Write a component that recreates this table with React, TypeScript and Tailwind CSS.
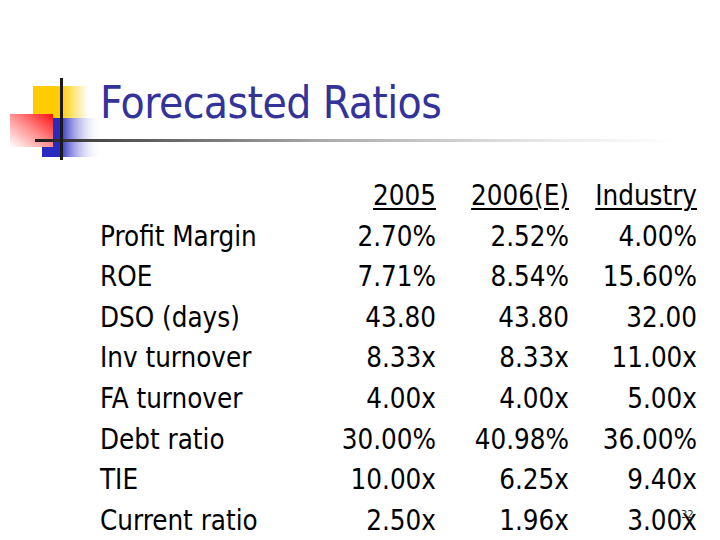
const rows: [string, string, string, string][] = [
  ["Profit Margin", "2.70%", "2.52%", "4.00%"],
  ["ROE", "7.71%", "8.54%", "15.60%"],
  ["DSO (days)", "43.80", "43.80", "32.00"],
  ["Inv turnover", "8.33x", "8.33x", "11.00x"],
  ["FA turnover", "4.00x", "4.00x", "5.00x"],
  ["Debt ratio", "30.00%", "40.98%", "36.00%"],
  ["TIE", "10.00x", "6.25x", "9.40x"],
  ["Current ratio", "2.50x", "1.96x", "3.00x"],
];

// slide template decoration: overlapping colour squares and crossed rules
function Logo() {
  return (
    <svg className="absolute left-0 top-0" width="720" height="170" viewBox="0 0 720 170">
      <defs>
        <linearGradient id="yel" x1="0" y1="0" x2="1" y2="0">
          <stop offset="0" stopColor="#ffcc00" />
          <stop offset="0.5" stopColor="#ffcc00" />
          <stop offset="1" stopColor="#ffffff" />
        </linearGradient>
        <linearGradient id="blu" x1="0" y1="0" x2="1" y2="0">
          <stop offset="0" stopColor="#2a2ac0" />
          <stop offset="0.3" stopColor="#2a2ac0" />
          <stop offset="1" stopColor="#ffffff" stopOpacity="0" />
        </linearGradient>
        <linearGradient id="red" x1="1" y1="0" x2="0" y2="1">
          <stop offset="0" stopColor="#ff1010" />
          <stop offset="0.5" stopColor="#ff9090" />
          <stop offset="1" stopColor="#ffffff" />
        </linearGradient>
        <linearGradient id="rule" x1="0" y1="0" x2="1" y2="0">
          <stop offset="0" stopColor="#1a1a1a" />
          <stop offset="0.08" stopColor="#444444" />
          <stop offset="0.45" stopColor="#aaaaaa" />
          <stop offset="0.8" stopColor="#e8e8e8" />
          <stop offset="1" stopColor="#ffffff" />
        </linearGradient>
      </defs>
      <rect x="33" y="86" width="55" height="32" fill="url(#yel)" />
      <rect x="42" y="118" width="60" height="39" fill="url(#blu)" />
      <rect x="10" y="114" width="43" height="33" fill="url(#red)" />
      <rect x="35" y="139" width="640" height="3" fill="url(#rule)" />
      <rect x="60" y="78" width="3" height="82" fill="#1a1a1a" />
    </svg>
  );
}

export default function App() {
  return (
    <div
      className="relative w-[720px] h-[540px] bg-white overflow-hidden text-black"
      style={{ fontFamily: '"DejaVu Sans Condensed", "DejaVu Sans", sans-serif' }}
    >
      <Logo />

      <div className="relative flex flex-col pl-[100px]">
        <h1 className="h-[176px] pt-[81px] text-[44px] leading-[44px] text-[#333399] tracking-[-0.6px]">
          Forecasted Ratios
        </h1>

        <div className="grid grid-cols-[236px_100px_133px_128px] text-[27.5px] leading-[40.6px] -mt-[1px]">
          <div />
          <div className="text-right"><span className="underline underline-offset-[3px] decoration-2">2005</span></div>
          <div className="text-right"><span className="underline underline-offset-[3px] decoration-2">2006(E)</span></div>
          <div className="text-right"><span className="underline underline-offset-[3px] decoration-2">Industry</span></div>
          {rows.map((r) => (
            <div key={r[0]} className="contents">
              <div>{r[0]}</div>
              <div className="text-right">{r[1]}</div>
              <div className="text-right">{r[2]}</div>
              <div className="text-right">{r[3]}</div>
            </div>
          ))}
        </div>
      </div>

      {/* slide number */}
      <div className="absolute left-[681px] top-[508px] text-[11px] leading-[14px] text-[#333333]">32</div>
    </div>
  );
}
